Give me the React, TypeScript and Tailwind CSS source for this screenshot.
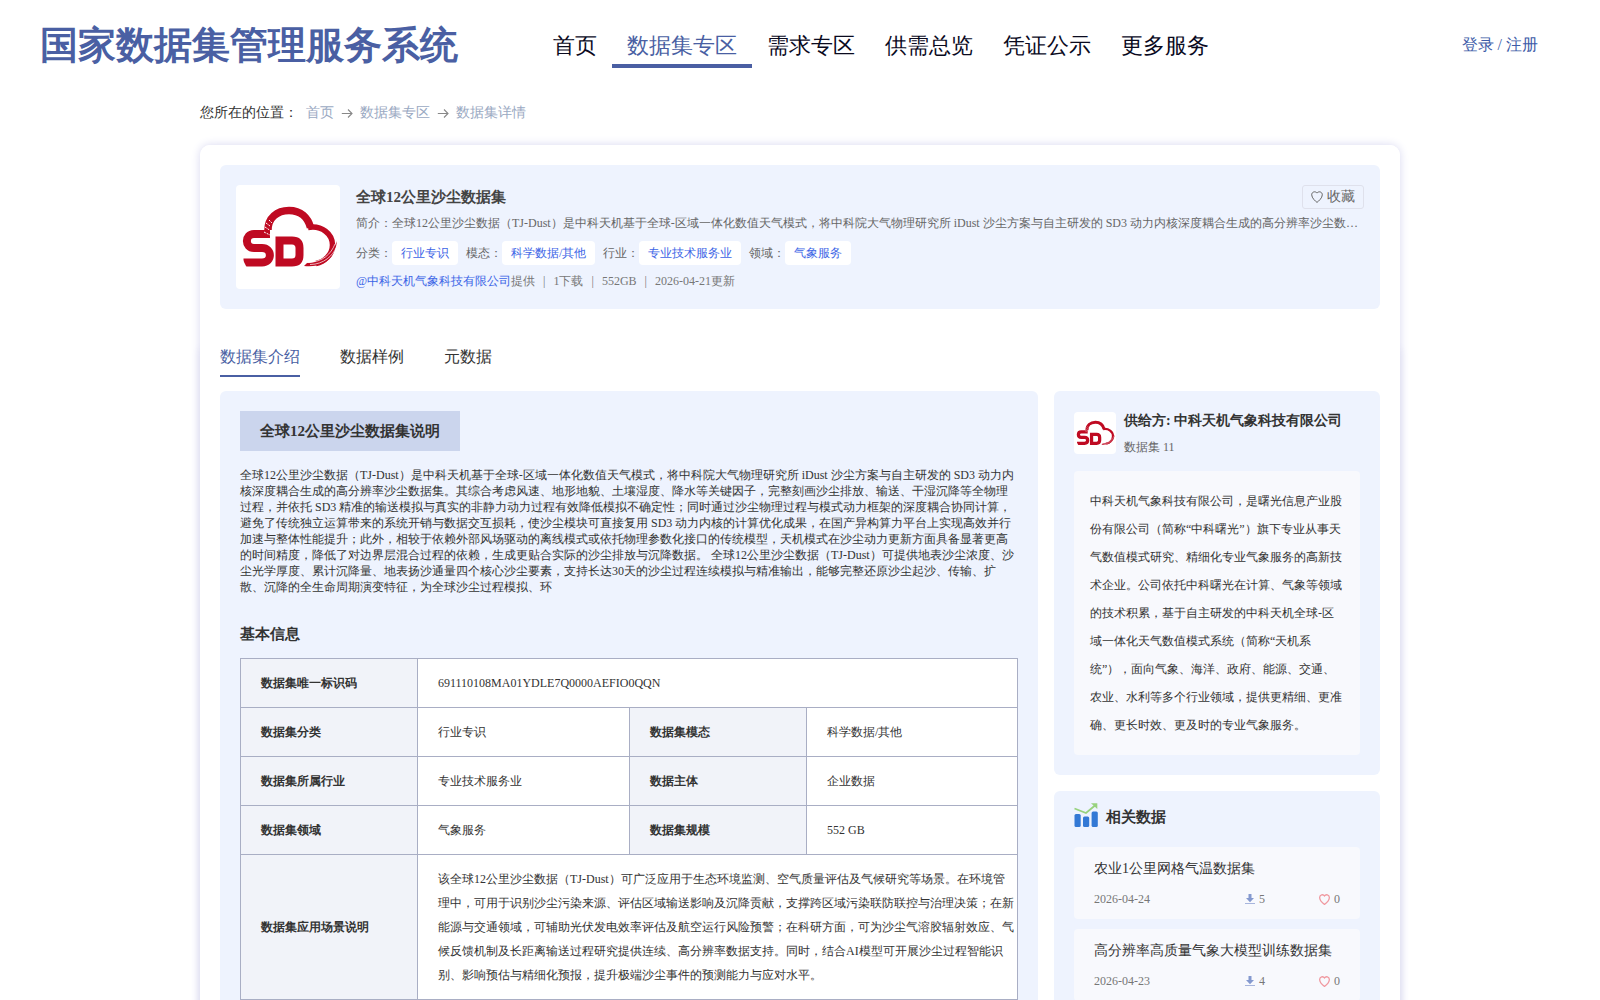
import { ReactNode } from "react";

const NAV = ["首页", "数据集专区", "需求专区", "供需总览", "凭证公示", "更多服务"];

const TAGS = [
  { label: "分类：", value: "行业专识" },
  { label: "模态：", value: "科学数据/其他" },
  { label: "行业：", value: "专业技术服务业" },
  { label: "领域：", value: "气象服务" },
];

const ROWS = [
  ["数据集分类", "行业专识", "数据集模态", "科学数据/其他"],
  ["数据集所属行业", "专业技术服务业", "数据主体", "企业数据"],
  ["数据集领域", "气象服务", "数据集规模", "552 GB"],
];

const RELATED = [
  { name: "农业1公里网格气温数据集", date: "2026-04-24", downloads: 5, likes: 0 },
  { name: "高分辨率高质量气象大模型训练数据集", date: "2026-04-23", downloads: 4, likes: 0 },
];

const INTRO =
  "全球12公里沙尘数据（TJ-Dust）是中科天机基于全球-区域一体化数值天气模式，将中科院大气物理研究所 iDust 沙尘方案与自主研发的 SD3 动力内核深度耦合生成的高分辨率沙尘数据集。其综合考虑风速、地形地貌、土壤湿度、降水等关键因子，完整刻画沙尘排放、输送、干湿沉降等全物理过程，并依托 SD3 精准的输送模拟与真实的非静力动力过程有效降低模拟不确定性；同时通过沙尘物理过程与模式动力框架的深度耦合协同计算，避免了传统独立运算带来的系统开销与数据交互损耗，使沙尘模块可直接复用 SD3 动力内核的计算优化成果，在国产异构算力平台上实现高效并行加速与整体性能提升；此外，相较于依赖外部风场驱动的离线模式或依托物理参数化接口的传统模型，天机模式在沙尘动力更新方面具备显著更高的时间精度，降低了对边界层混合过程的依赖，生成更贴合实际的沙尘排放与沉降数据。 全球12公里沙尘数据（TJ-Dust）可提供地表沙尘浓度、沙尘光学厚度、累计沉降量、地表扬沙通量四个核心沙尘要素，支持长达30天的沙尘过程连续模拟与精准输出，能够完整还原沙尘起沙、传输、扩散、沉降的全生命周期演变特征，为全球沙尘过程模拟、环";

const SUMMARY =
  "全球12公里沙尘数据（TJ-Dust）是中科天机基于全球-区域一体化数值天气模式，将中科院大气物理研究所 iDust 沙尘方案与自主研发的 SD3 动力内核深度耦合生成的高分辨率沙尘数…";

const SCENE =
  "该全球12公里沙尘数据（TJ-Dust）可广泛应用于生态环境监测、空气质量评估及气候研究等场景。在环境管理中，可用于识别沙尘污染来源、评估区域输送影响及沉降贡献，支撑跨区域污染联防联控与治理决策；在新能源与交通领域，可辅助光伏发电效率评估及航空运行风险预警；在科研方面，可为沙尘气溶胶辐射效应、气候反馈机制及长距离输送过程研究提供连续、高分辨率数据支持。同时，结合AI模型可开展沙尘过程智能识别、影响预估与精细化预报，提升极端沙尘事件的预测能力与应对水平。";

const COMPANY =
  "中科天机气象科技有限公司，是曙光信息产业股份有限公司（简称“中科曙光”）旗下专业从事天气数值模式研究、精细化专业气象服务的高新技术企业。公司依托中科曙光在计算、气象等领域的技术积累，基于自主研发的中科天机全球-区域一体化天气数值模式系统（简称“天机系统”），面向气象、海洋、政府、能源、交通、农业、水利等多个行业领域，提供更精细、更准确、更长时效、更及时的专业气象服务。";

function Logo({ className }: { className: string }) {
  return (
    <svg viewBox="0 0 104 104" className={className} fill="none">
      <rect width="104" height="104" fill="#fff" />
      <g stroke="#bf0a22">
        <path d="M32 45C32 33 41 25.500 53 25.500C65 25.500 72 33 74.500 42.500" strokeWidth="7.500" />
        <path d="M72 42.500C86 40 96.500 49 96.500 60C96.500 70 88 77 80 78.500" strokeWidth="5.500" />
        <path d="M34 49H18C8.500 49 8.500 63 18 63H26C36.500 63 36.500 77.500 26 77.500H7.500" strokeWidth="8" />
        <path d="M43.500 55.500H56C61 55.500 63.500 58 63.500 63V70C63.500 75 61 77.500 56 77.500H43.500Z" strokeWidth="8" />
      </g>
      <path d="M68 81C87 83 99 74 101 56C96 70 87 77 71 78Z" fill="#bf0a22" />
      <path d="M72 77.500C87 77 95 69 99 59M74 79.500C88 79.500 97 70 100 63" stroke="#fff" strokeWidth=".7" />
      <path d="M30 38L34 41M29 42L35 46M33 35L36 38M28 47L34 50" stroke="#fff" strokeWidth="1" strokeDasharray="2 1" />
      <path d="M6 73L10.500 82H6Z" fill="#fff" />
    </svg>
  );
}

function Heart({ className }: { className: string }) {
  return (
    <svg viewBox="0 0 12 12" className={className} fill="none" stroke="currentColor">
      <path d="M6 11.400C4.500 10.300 .7 7 .7 3.800C.7 .6 4.600 -.1 6 2.100C7.400 -.1 11.300 .6 11.300 3.800C11.300 7 7.500 10.300 6 11.400Z" />
    </svg>
  );
}

function Arrow() {
  return (
    <svg viewBox="0 0 12 12" className="mx-[7px] size-3" fill="none" stroke="#888" strokeWidth="1.1">
      <path d="M.8 6.500H11M7 2.500L11 6.500L7 10.500" />
    </svg>
  );
}

function Th({ children }: { children: ReactNode }) {
  return <th className="border border-[#a9aec4] bg-[#f1f3f9] pl-5 text-left font-bold">{children}</th>;
}

function Td({ children, colSpan }: { children: ReactNode; colSpan?: number }) {
  return (
    <td colSpan={colSpan} className="border border-[#a9aec4] bg-white py-3 pr-[3px] pl-5 leading-6">
      {children}
    </td>
  );
}

export default function App() {
  return (
    <div className="h-[1000px] overflow-hidden bg-white font-['Liberation_Serif',serif] text-xs text-[#333]">
      <header className="flex h-[90px] items-center pl-10">
        <h1 className="w-[498px] pt-px text-[38px] font-bold text-[#4a5fa3]">国家数据集管理服务系统</h1>
        <nav className="flex text-[22px] text-[#0a0a1e]">
          {NAV.map((item, i) => (
            <a
              key={item}
              className={
                i === 1
                  ? "h-[46px] border-b-4 border-[#4a5fa3] px-[15px] leading-[48px] text-[#4a5fa3]"
                  : "h-[46px] px-[15px] leading-[48px]"
              }
            >
              {item}
            </a>
          ))}
        </nav>
        <div className="mr-[62px] ml-auto text-base text-[#3e5ca8]">登录 / 注册</div>
      </header>

      <div className="mx-auto w-[1200px]">
        <div className="flex h-[55px] items-center pb-[9px] text-sm text-[#9aa9c2]">
          <span className="mr-2 text-[#333]">您所在的位置：</span>
          首页
          <Arrow />
          数据集专区
          <Arrow />
          数据集详情
        </div>

        <div className="h-[900px] rounded-[10px] shadow-[0_0_10px_#d8d8f0]">
          <div className="relative h-[200px] rounded-t-[10px] bg-white px-5 pt-5">
            <section className="flex h-36 rounded-md bg-[#eef3fe] px-4 pt-5">
              <Logo className="size-[104px] shrink-0 rounded" />
              <div className="ml-4 min-w-0 flex-1 text-[#666]">
                <div className="flex h-6 items-center justify-between">
                  <h2 className="pt-[2px] text-[15px] font-bold text-[#444]">全球12公里沙尘数据集</h2>
                  <button className="flex h-6 w-[62px] items-center justify-center gap-1 rounded-[3px] border border-[#dfe1ec] text-sm">
                    <Heart className="size-3" />
                    收藏
                  </button>
                </div>
                <p className="mt-[6px] leading-4 whitespace-nowrap">简介：{SUMMARY}</p>
                <div className="mt-[10px] flex gap-2 leading-6">
                  {TAGS.map((t) => (
                    <div key={t.label} className="flex">
                      {t.label}
                      <span className="rounded bg-white px-[9px] text-[#3c65e6]">{t.value}</span>
                    </div>
                  ))}
                </div>
                <div className="mt-2 flex leading-4 text-[#777]">
                  <span className="text-[#3c65e6]">@中科天机气象科技有限公司</span>提供
                  <i className="mx-2 not-italic">|</i>1下载
                  <i className="mx-2 not-italic">|</i>552GB
                  <i className="mx-2 not-italic">|</i>2026-04-21更新
                </div>
              </div>
            </section>
          </div>

          {/* the header card lies above this one, so its shadow only shows at the sides */}
          <div className="h-[700px] bg-white px-5 shadow-[0_4px_8px_#dedef0]">
            <div className="flex h-8 items-end gap-10 text-base">
              <a className="border-b-2 border-[#4a5fa3] leading-[37px] text-[#4a5fa3]">数据集介绍</a>
              <a className="pb-[2px] leading-[37px]">数据样例</a>
              <a className="pb-[2px] leading-[37px]">元数据</a>
            </div>

            <div className="mt-[14px] flex items-start gap-4">
              <main className="h-[700px] w-[818px] rounded-md bg-[#eef3fe] p-5">
                <h3 className="h-10 w-[220px] bg-[#cbd5ed] pl-5 text-[15px] leading-10 font-bold">
                  全球12公里沙尘数据集说明
                </h3>
                <p className="mt-4 leading-4">{INTRO}</p>
                <h3 className="mt-[27px] text-[15px] leading-6 font-bold">基本信息</h3>
                <table className="mt-3 w-[778px] table-fixed border-collapse">
                  <colgroup>
                    <col className="w-[177px]" />
                    <col className="w-[212px]" />
                    <col className="w-[177px]" />
                    <col />
                  </colgroup>
                  <tbody>
                    <tr>
                      <Th>数据集唯一标识码</Th>
                      <Td colSpan={3}>691110108MA01YDLE7Q0000AEFIO0QQN</Td>
                    </tr>
                    {ROWS.map((r) => (
                      <tr key={r[0]}>
                        <Th>{r[0]}</Th>
                        <Td>{r[1]}</Td>
                        <Th>{r[2]}</Th>
                        <Td>{r[3]}</Td>
                      </tr>
                    ))}
                    <tr>
                      <Th>数据集应用场景说明</Th>
                      <Td colSpan={3}>{SCENE}</Td>
                    </tr>
                  </tbody>
                </table>
              </main>

              <aside className="flex w-[326px] flex-col gap-4">
                <section className="h-96 rounded-md bg-[#eef3fe] px-5 pt-[21px]">
                  <div className="flex h-[42px]">
                    <Logo className="size-[42px] rounded" />
                    <div className="ml-2">
                      <h4 className="mt-[-2px] text-sm leading-[22px] font-bold">供给方: 中科天机气象科技有限公司</h4>
                      <p className="mt-[7px] leading-4 text-[#666]">数据集 11</p>
                    </div>
                  </div>
                  <p className="mt-[17px] h-[284px] rounded bg-[#f8f9fd] p-4 leading-7">{COMPANY}</p>
                </section>
                <section className="h-[300px] rounded-md bg-[#eef3fe] px-5 pt-3">
                  <div className="flex h-7 gap-2">
                    <svg viewBox="0 0 24 24" className="size-6">
                      <g fill="#3379d5">
                        <rect x=".5" y="11" width="6.200" height="13" rx="1.500" />
                        <rect x="9" y="13.500" width="6.200" height="10.500" rx="1.500" />
                        <rect x="17.600" y="8.500" width="6.200" height="15.500" rx="1.500" />
                      </g>
                      <path d="M.5 5.500L12 10L21 2.500" fill="none" stroke="#98d27e" strokeWidth="1.800" />
                      <path d="M17 .3H23.300V6Z" fill="#98d27e" />
                    </svg>
                    <h4 className="text-[15px] leading-7 font-bold">相关数据</h4>
                  </div>
                  <div className="mt-4 flex flex-col gap-[10px]">
                    {RELATED.map((d) => (
                      <div key={d.name} className="h-[72px] rounded bg-[#f8f9fd] px-5">
                        <h5 className="pt-[11px] text-sm leading-[22px]">{d.name}</h5>
                        <div className="mt-[11px] flex items-center leading-4 text-[#777]">
                          <span className="w-[151px]">{d.date}</span>
                          <span className="flex w-[74px] items-center gap-[4px]">
                            <svg viewBox="0 0 10 10" className="size-[10px]" fill="#8499cf">
                              <path d="M3.500 0H6.500V4H9L5 8.300L1 4H3.500Z" />
                              <rect y="9" width="10" height="1" opacity=".7" />
                            </svg>
                            {d.downloads}
                          </span>
                          <Heart className="mr-1 size-[11px] stroke-[1.4] text-[#f0989f]" />
                          {d.likes}
                        </div>
                      </div>
                    ))}
                  </div>
                </section>
              </aside>
            </div>
          </div>
        </div>
      </div>
    </div>
  );
}
